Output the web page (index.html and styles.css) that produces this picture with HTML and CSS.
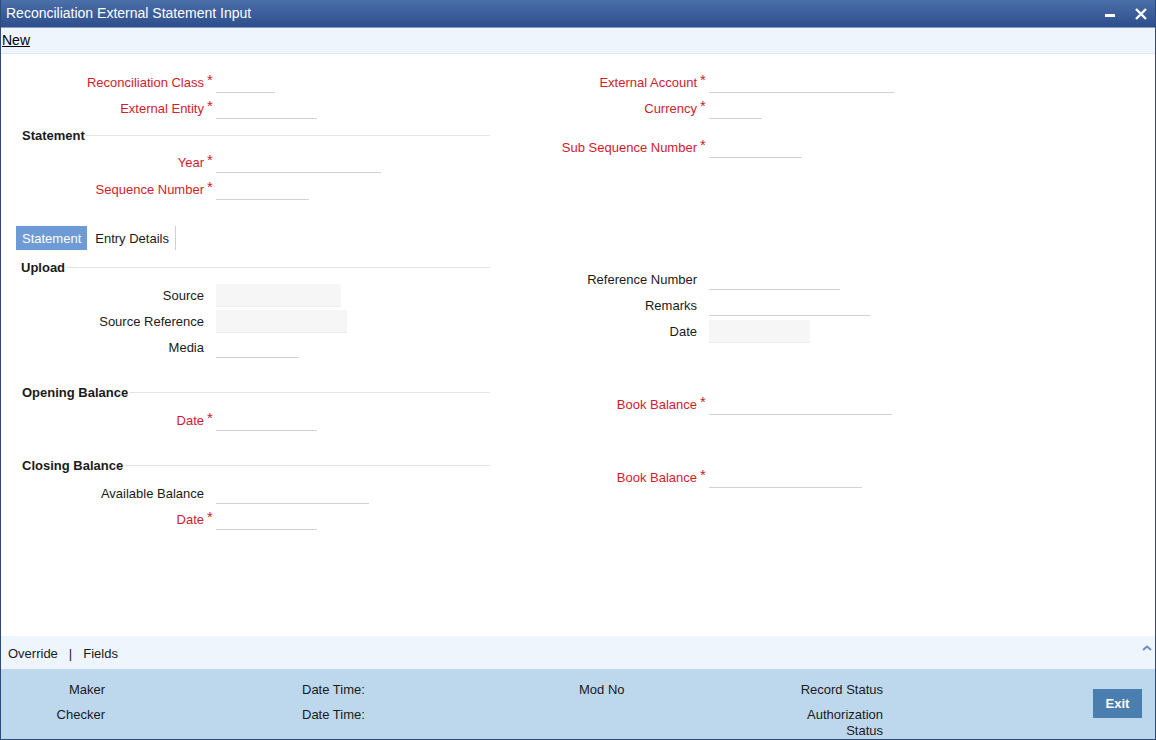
FILE: index.html
```html
<!DOCTYPE html>
<html lang="en">
<head>
    <meta charset="UTF-8">
    <title>Reconciliation External Statement Input</title>
    <link rel="stylesheet" href="styles.css">
</head>
<body>

<div class="window">
    <div class="titlebar">
        <span class="title">Reconciliation External Statement Input</span>
        <div class="win-btns">
            <svg class="btn-min" width="10" height="3" viewBox="0 0 10 3"><rect width="10" height="3" fill="#fff"/></svg>
            <svg class="btn-close" width="12" height="12" viewBox="0 0 12 12"><path d="M1 1L11 11M11 1L1 11" stroke="#fff" stroke-width="2.4"/></svg>
        </div>
    </div>

    <div class="toolbar">
        <a href="#">New</a>
    </div>

    <div class="main">
        <!-- header fields -->
        <div class="block head-block">
            <div class="col col-left">
                <div class="row">
                    <label class="lbl req-lbl">Reconciliation Class</label><span class="star">*</span>
                    <input type="text" class="w59">
                </div>
                <div class="row">
                    <label class="lbl req-lbl">External Entity</label><span class="star">*</span>
                    <input type="text" class="w101">
                </div>
                <div class="sect sect-stmt">Statement</div>
                <div class="row row-year">
                    <label class="lbl req-lbl">Year</label><span class="star">*</span>
                    <input type="text" class="w165">
                </div>
                <div class="row row-seq">
                    <label class="lbl req-lbl">Sequence Number</label><span class="star">*</span>
                    <input type="text" class="w93">
                </div>
            </div>
            <div class="col col-right">
                <div class="row">
                    <label class="lbl req-lbl">External Account</label><span class="star">*</span>
                    <input type="text" class="w185">
                </div>
                <div class="row">
                    <label class="lbl req-lbl">Currency</label><span class="star">*</span>
                    <input type="text" class="w53">
                </div>
                <div class="row row-subseq">
                    <label class="lbl req-lbl">Sub Sequence Number</label><span class="star">*</span>
                    <input type="text" class="w93">
                </div>
            </div>
        </div>

        <!-- tabs -->
        <div class="tabs">
            <span class="tab active">Statement</span>
            <span class="tab">Entry Details</span>
        </div>

        <div class="block tab-body">
            <div class="col col-left">
                <div class="sect sect-first">Upload</div>
                <div class="row first-row">
                    <label class="lbl">Source</label><span class="star"></span>
                    <input type="text" class="box w125" readonly>
                </div>
                <div class="row">
                    <label class="lbl">Source Reference</label><span class="star"></span>
                    <input type="text" class="box w131" readonly>
                </div>
                <div class="row">
                    <label class="lbl">Media</label><span class="star"></span>
                    <input type="text" class="w83">
                </div>

                <div class="sect">Opening Balance</div>
                <div class="row first-row">
                    <label class="lbl req-lbl">Date</label><span class="star">*</span>
                    <input type="text" class="w101">
                </div>

                <div class="sect">Closing Balance</div>
                <div class="row first-row">
                    <label class="lbl">Available Balance</label><span class="star"></span>
                    <input type="text" class="w153">
                </div>
                <div class="row">
                    <label class="lbl req-lbl">Date</label><span class="star">*</span>
                    <input type="text" class="w101">
                </div>
            </div>
            <div class="col col-right">
                <div class="row row-ref">
                    <label class="lbl">Reference Number</label><span class="star"></span>
                    <input type="text" class="w131">
                </div>
                <div class="row">
                    <label class="lbl">Remarks</label><span class="star"></span>
                    <input type="text" class="w161">
                </div>
                <div class="row">
                    <label class="lbl">Date</label><span class="star"></span>
                    <input type="text" class="box w101" readonly>
                </div>
                <div class="row row-book">
                    <label class="lbl req-lbl">Book Balance</label><span class="star">*</span>
                    <input type="text" class="w183">
                </div>
                <div class="row row-book">
                    <label class="lbl req-lbl">Book Balance</label><span class="star">*</span>
                    <input type="text" class="w153">
                </div>
            </div>
        </div>
    </div>

    <div class="subbar">
        <a href="#">Override</a>
        <span class="pipe">|</span>
        <a href="#">Fields</a>
        <svg class="caret" width="10" height="6" viewBox="0 0 10 6"><path d="M1 5L5 1.5L9 5" fill="none" stroke="#6d8fc2" stroke-width="2"/></svg>
    </div>

    <div class="audit">
        <div class="audit-grid">
            <span class="a-lbl right">Maker</span>
            <span></span>
            <span class="a-lbl">Date Time:</span>
            <span class="a-lbl">Mod No</span>
            <span class="a-lbl right">Record Status</span>

            <span class="a-lbl right">Checker</span>
            <span></span>
            <span class="a-lbl">Date Time:</span>
            <span></span>
            <span class="a-lbl right">Authorization<br>Status</span>
        </div>
        <button class="exit-btn">Exit</button>
    </div>
</div>

</body>
</html>
```

FILE: styles.css
```css
body {
    margin: 0;
    padding: 0;
    font-family: "Liberation Sans", Arial, sans-serif;
    font-size: 13px;
    color: #1a1a1a;
    background-color: #fff;
}
.window {
    width: 1156px;
    height: 740px;
    box-sizing: border-box;
    border: 1px solid #2c4a7e;
    border-top: none;
    display: flex;
    flex-direction: column;
    overflow: hidden;
}
.titlebar {
    height: 27px;
    margin: 0 -1px;
    display: flex;
    align-items: center;
    background: linear-gradient(#4b6fa9, #2d4e8c);
    border-bottom: 1px solid #8a9dbd;
    color: #fff;
    font-size: 14px;
}
.titlebar .title {
    padding-left: 6px;
    margin-top: -1px;
}
.win-btns {
    margin-left: auto;
    display: flex;
    align-items: center;
    margin-right: 9px;
}
.btn-min {
    margin-right: 20px;
    margin-top: 3px;
}
.toolbar {
    height: 25px;
    display: flex;
    align-items: center;
    background-color: #eef5fd;
    border-bottom: 1px solid #e2e7ee;
    padding-left: 1px;
    font-size: 14px;
}
.toolbar a {
    color: #000;
    text-decoration: underline;
    margin-top: -1px;
}
.main {
    flex: 1;
    padding-left: 15px;
}
.block {
    display: flex;
}
.head-block {
    padding-top: 15px;
}
.col-left {
    width: 474px;
}
.col-right {
    margin-left: 10px;
}
.row {
    display: flex;
    align-items: center;
    height: 26px;
}
.lbl {
    width: 188px;
    text-align: right;
    line-height: 16px;
    padding-top: 1px;
}
.col-right .lbl {
    width: 197px;
}
.req-lbl {
    color: #d01c2c;
}
.star {
    width: 12px;
    text-align: center;
    color: #d01c2c;
    align-self: flex-start;
    margin-top: 3px;
    font-size: 15px;
    line-height: 16px;
}
.row input {
    height: 22px;
    padding: 0 2px;
    border: none;
    border-bottom: 1px solid #d3d3d3;
    background: transparent;
    box-sizing: border-box;
    font-family: inherit;
    font-size: 13px;
    outline: none;
}
.row input.box {
    height: 23px;
    background-color: #f6f6f6;
    border-bottom-color: #ececec;
}
.w53 { width: 53px; }
.w59 { width: 59px; }
.w83 { width: 83px; }
.w93 { width: 93px; }
.w101 { width: 101px; }
.w125 { width: 125px; }
.w131 { width: 131px; }
.w153 { width: 153px; }
.w161 { width: 161px; }
.w165 { width: 165px; }
.w183 { width: 183px; }
.w185 { width: 185px; }

.sect {
    display: flex;
    align-items: center;
    height: 22px;
    padding-left: 6px;
    font-weight: bold;
    margin-top: 21px;
}
.sect::after {
    content: "";
    flex: 1;
    border-top: 1px solid #e4e4e4;
    margin-left: 1px;
}
.sect-stmt {
    margin-top: 3px;
}
.sect-first {
    margin-top: 6px;
    padding-left: 5px;
}
.row-year {
    margin-top: 3px;
}
.row-seq {
    margin-top: 1px;
}
.row-subseq {
    margin-top: 13px;
}
.first-row {
    margin-top: 4px;
}
.row-ref {
    margin-top: 16px;
}
.row-book {
    margin-top: 47px;
}

.tabs {
    display: flex;
    height: 24px;
    margin-top: 24px;
}
.tab {
    display: flex;
    align-items: center;
    padding: 0 6px 0 8px;
    border-right: 1px solid #cfcfcf;
}
.tab.active {
    padding: 0 6px;
    background-color: #6c9bd5;
    color: #fff;
    border-right: none;
}

.subbar {
    height: 33px;
    display: flex;
    align-items: center;
    padding-left: 7px;
    padding-top: 1px;
    box-sizing: border-box;
    background-color: #eef5fd;
}
.subbar a {
    color: #1a1a1a;
    text-decoration: none;
}
.pipe {
    margin: 0 11px 0 11px;
}
.caret {
    margin-left: auto;
    margin-right: 3px;
    align-self: flex-start;
    margin-top: 8px;
}

.audit {
    flex: 0 0 70px;
    display: flex;
    align-items: flex-start;
    background-color: #bdd8ec;
}
.audit-grid {
    display: grid;
    grid-template-columns: 104px 197px 277px 121px 183px;
    row-gap: 9px;
    padding-top: 13px;
    line-height: 16px;
    color: #1a1a1a;
}
.a-lbl.right {
    text-align: right;
}
.exit-btn {
    margin-left: auto;
    margin-right: 13px;
    margin-top: 20px;
    width: 49px;
    height: 29px;
    border: none;
    background-color: #4a7eae;
    color: #fff;
    font-family: inherit;
    font-size: 13px;
    font-weight: bold;
    cursor: pointer;
}
```
